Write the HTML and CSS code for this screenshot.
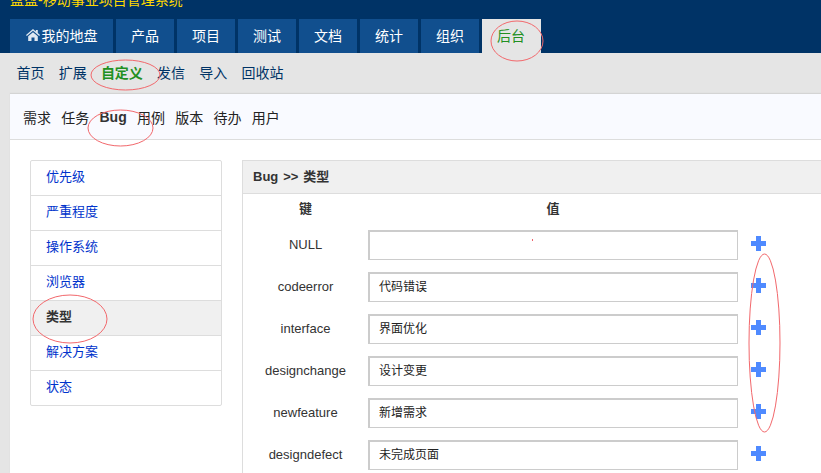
FILE: index.html
```html
<!DOCTYPE html>
<html lang="zh">
<head>
<meta charset="utf-8">
<title>后台</title>
<link rel="stylesheet" href="styles.css">
</head>
<body>
<header class="header">
  <div class="brand">盘盘-移动事业项目管理系统</div>
  <nav class="tabs">
    <a class="tab tab-home"><svg class="home" viewBox="0 0 14 12"><path d="M7 0 0 6l.8 1L7 1.8 13.2 7l.8-1-2.2-1.9V1h-2v1.4z"/><path d="M2.2 7.2 7 3.2l4.8 4V12H8.5V8.5h-3V12H2.2z"/></svg>我的地盘</a>
    <a class="tab">产品</a>
    <a class="tab">项目</a>
    <a class="tab">测试</a>
    <a class="tab">文档</a>
    <a class="tab">统计</a>
    <a class="tab">组织</a>
    <a class="tab tab-active">后台</a>
  </nav>
</header>
<nav class="subnav">
  <a>首页</a><a>扩展</a><a class="subnav-active">自定义</a><a>发信</a><a>导入</a><a>回收站</a>
</nav>
<main class="page">
  <nav class="modules">
    <a>需求</a><a>任务</a><a class="module-active">Bug</a><a>用例</a><a>版本</a><a>待办</a><a>用户</a>
  </nav>
  <div class="content">
    <ul class="side">
      <li>优先级</li>
      <li>严重程度</li>
      <li>操作系统</li>
      <li>浏览器</li>
      <li class="side-active">类型</li>
      <li>解决方案</li>
      <li>状态</li>
    </ul>
    <section class="panel">
      <h2 class="panel-title">Bug &gt;&gt; 类型</h2>
      <div class="grid">
        <div class="head">键</div><div class="head">值</div><div></div>
        <div class="key">NULL</div><div class="field"></div><svg class="plus" viewBox="0 0 15 15"><path d="M5 0h5v5h5v5h-5v5H5v-5H0V5h5z"/></svg>
        <div class="key">codeerror</div><div class="field">代码错误</div><svg class="plus" viewBox="0 0 15 15"><path d="M5 0h5v5h5v5h-5v5H5v-5H0V5h5z"/></svg>
        <div class="key">interface</div><div class="field">界面优化</div><svg class="plus" viewBox="0 0 15 15"><path d="M5 0h5v5h5v5h-5v5H5v-5H0V5h5z"/></svg>
        <div class="key">designchange</div><div class="field">设计变更</div><svg class="plus" viewBox="0 0 15 15"><path d="M5 0h5v5h5v5h-5v5H5v-5H0V5h5z"/></svg>
        <div class="key">newfeature</div><div class="field">新增需求</div><svg class="plus" viewBox="0 0 15 15"><path d="M5 0h5v5h5v5h-5v5H5v-5H0V5h5z"/></svg>
        <div class="key">designdefect</div><div class="field">未完成页面</div><svg class="plus" viewBox="0 0 15 15"><path d="M5 0h5v5h5v5h-5v5H5v-5H0V5h5z"/></svg>
      </div>
    </section>
  </div>
</main>
<svg class="marks" viewBox="0 0 821 473" width="821" height="473">
  <ellipse cx="125.500" cy="75" rx="34.500" ry="15"/>
  <ellipse cx="517" cy="41" rx="26" ry="20"/>
  <ellipse cx="120.500" cy="128" rx="32.500" ry="18"/>
  <ellipse cx="70" cy="319" rx="37" ry="24"/>
  <ellipse cx="764.500" cy="343" rx="15.500" ry="89"/>
  <rect class="speck" x="532" y="239" width="1" height="2"/>
</svg>
</body>
</html>
```
FILE: styles.css
```css
* { box-sizing: border-box; }
html, body { margin: 0; padding: 0; }
body {
  width: 821px;
  height: 473px;
  overflow: hidden;
  position: relative;
  background: #e5e5e5;
  color: #333;
  font-family: "Liberation Sans", "Noto Sans CJK SC", sans-serif;
  font-size: 13px;
}
.header {
  height: 53px;
  background: #036;
  padding-left: 10px;
  position: relative;
  overflow: hidden;
}
.brand {
  position: absolute;
  left: 10px;
  top: -10px;
  color: #ffd900;
  font-size: 14px;
  line-height: 20px;
  white-space: nowrap;
}
.tabs {
  display: flex;
  gap: 3px;
  padding-top: 19px;
}
.tab {
  width: 58px;
  height: 34px;
  padding-bottom: 2px;
  background: #114f8e;
  color: #fff;
  font-size: 14px;
  display: flex;
  align-items: center;
  justify-content: center;
}
.tab-home { width: 103px; }
.home { width: 14px; height: 12px; fill: #dfe8f2; margin-right: 2px; }
.tab-active {
  width: 59px;
  background: #e5e5e5;
  color: #229022;
  justify-content: flex-start;
  padding-left: 15px;
}
.subnav {
  height: 41px;
  display: flex;
  align-items: center;
  gap: 14.200px;
  padding: 0 0 3px 16.500px;
  color: #003366;
  font-size: 14px;
}
.subnav-active { color: #229022; font-weight: 700; }
.page {
  margin-left: 10px;
  height: 379px;
  background: #fff;
  box-shadow: 0 -1px 1px #d4d4d4;
}
.modules {
  height: 46px;
  display: flex;
  align-items: center;
  gap: 10.250px;
  padding: 0 0 0 13px;
  background: #f9faff;
  border-bottom: 1px solid #ddd;
  color: #222;
  font-size: 14px;
}
.module-active { font-weight: 700; color: #333; }
.content {
  display: flex;
  align-items: flex-start;
  gap: 20px;
  padding: 20px 0 0 20px;
}
.side {
  list-style: none;
  margin: 0;
  padding: 0;
  width: 192px;
  flex: none;
  border: 1px solid #ddd;
  border-radius: 2px;
  color: #0033cc;
  font-size: 13px;
}
.side li {
  height: 35px;
  line-height: 32px;
  padding-left: 15px;
  border-top: 1px solid #ddd;
}
.side li:first-child { height: 34px; border-top: 0; }
.side .side-active { background: #f0f0f0; color: #333; font-weight: 700; }
.panel {
  flex: 1;
  height: 320px;
  border-left: 1px solid #ddd;
  border-top: 1px solid #ddd;
}
.panel-title {
  margin: 0;
  height: 33px;
  line-height: 31px;
  padding-left: 10px;
  background: #f0f0f0;
  border-bottom: 1px solid #ddd;
  font-size: 13px;
  font-weight: 700;
  word-spacing: 1.300px;
  color: #333;
}
.grid {
  display: grid;
  grid-template-columns: 125px 370px 41px;
  grid-template-rows: 24px;
  grid-auto-rows: 30px;
  row-gap: 12px;
  align-items: center;
}
.head {
  align-self: start;
  font-weight: 700;
  text-align: center;
  line-height: 29px;
}
.key {
  align-self: start;
  text-align: center;
  font-size: 13px;
  color: #333;
  line-height: 29px;
}
.field {
  height: 30px;
  border: 1px solid #ccc;
  border-top-width: 2px;
  border-left-width: 2px;
  padding-left: 9px;
  background: #fff;
  line-height: 26px;
  font-size: 12px;
  color: #222;
}
.plus { width: 15px; height: 15px; fill: #4f8aff; margin: 0 0 4px 13px; }
.marks {
  position: absolute;
  left: 0;
  top: 0;
  pointer-events: none;
}
.marks ellipse { fill: none; stroke: #f2686c; stroke-width: 1; }
.speck { fill: #f0606a; }
```
